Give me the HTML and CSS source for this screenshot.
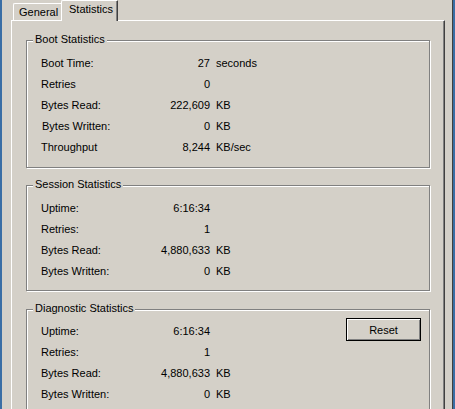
FILE: index.html
```html
<!DOCTYPE html>
<html>
<head>
<meta charset="utf-8">
<link rel="stylesheet" href="styles.css">
</head>
<body>
<div class="frame">
  <div class="window">
    <div class="tabs">
      <div class="tab">General</div>
      <div class="tab tab-active">Statistics</div>
    </div>
    <div class="panel">
      <div class="group group-boot">
        <span class="legend">Boot Statistics</span>
        <div class="rows">
          <span class="lbl">Boot Time:</span><span class="val">27</span><span class="unit">seconds</span>
          <span class="lbl">Retries</span><span class="val">0</span><span class="unit"></span>
          <span class="lbl">Bytes Read:</span><span class="val">222,609</span><span class="unit">KB</span>
          <span class="lbl lbl-shift">Bytes Written:</span><span class="val">0</span><span class="unit">KB</span>
          <span class="lbl">Throughput</span><span class="val">8,244</span><span class="unit">KB/sec</span>
        </div>
      </div>
      <div class="group group-session">
        <span class="legend">Session Statistics</span>
        <div class="rows">
          <span class="lbl">Uptime:</span><span class="val">6:16:34</span><span class="unit"></span>
          <span class="lbl">Retries:</span><span class="val">1</span><span class="unit"></span>
          <span class="lbl">Bytes Read:</span><span class="val">4,880,633</span><span class="unit">KB</span>
          <span class="lbl">Bytes Written:</span><span class="val">0</span><span class="unit">KB</span>
        </div>
      </div>
      <div class="group group-diag">
        <span class="legend">Diagnostic Statistics</span>
        <div class="diag-body">
          <div class="rows">
            <span class="lbl">Uptime:</span><span class="val">6:16:34</span><span class="unit"></span>
            <span class="lbl">Retries:</span><span class="val">1</span><span class="unit"></span>
            <span class="lbl">Bytes Read:</span><span class="val">4,880,633</span><span class="unit">KB</span>
            <span class="lbl">Bytes Written:</span><span class="val">0</span><span class="unit">KB</span>
          </div>
          <button class="btn">Reset</button>
        </div>
      </div>
    </div>
  </div>
</div>
</body>
</html>
```
FILE: styles.css
```css
html, body {
  margin: 0;
  padding: 0;
  height: 409px;
  overflow: hidden;
  background: #d4d0c8;
  font-family: "Liberation Sans", Arial, sans-serif;
  font-size: 11px;
  color: #000;
}

.frame {
  display: flex;
  height: 409px;
  border-left: 2px solid #3a6ea5;
  border-right: 2px solid #3a6ea5;
  box-sizing: border-box;
}

.window {
  flex: 1;
  border-right: 1px solid #404040;
  padding: 0 7px 0 9px;
  display: flex;
  flex-direction: column;
}

.tabs {
  display: flex;
  align-items: flex-end;
  height: 20px;
  padding-left: 2px;
}

.tab {
  box-sizing: border-box;
  width: 48px;
  line-height: 16px;
  padding-left: 5px;
  border-top: 1px solid #fff;
  border-left: 1px solid #fff;
  border-top-left-radius: 2px;
  white-space: nowrap;
  background: #d4d0c8;
}

.tab-active {
  width: 57px;
  padding-left: 7px;
  padding-bottom: 4px;
  margin-bottom: -1px;
  border-right: 1px solid #404040;
  box-shadow: inset -1px 0 #808080;
  border-top-right-radius: 1px;
  position: relative;
  z-index: 1;
}

.panel {
  flex: 1;
  border-top: 1px solid #fff;
  border-left: 1px solid #fff;
  border-right: 1px solid #404040;
  box-shadow: inset -1px 0 #808080;
  padding: 19px 13px 0 14px;
}

.group {
  position: relative;
  border: 1px solid #808080;
  box-shadow: inset 1px 1px #fff, 1px 1px #fff;
  padding: 12px 0 9px 14px;
  margin-right: 1px;
}

.group-session {
  margin-top: 17px;
  padding-bottom: 8px;
}

.group-diag {
  margin-top: 18px;
  padding-top: 11px;
  padding-right: 8px;
}

.legend {
  position: absolute;
  left: 6px;
  top: -8px;
  padding: 0 2px;
  line-height: 13px;
  background: #d4d0c8;
  white-space: nowrap;
}

.rows {
  display: grid;
  grid-template-columns: 79px 90px auto;
  grid-auto-rows: 21px;
  line-height: 21px;
}

.val {
  text-align: right;
}

.unit {
  padding-left: 6px;
}

.lbl-shift {
  padding-left: 1px;
}

.diag-body {
  display: flex;
  justify-content: space-between;
  align-items: flex-start;
}

.btn {
  width: 75px;
  height: 23px;
  margin-top: -3px;
  border: 1px solid #000;
  box-shadow: inset 1px 1px #fff, inset -1px -1px #808080;
  background: #d4d0c8;
  font: inherit;
  color: #000;
  padding: 0;
}
```
